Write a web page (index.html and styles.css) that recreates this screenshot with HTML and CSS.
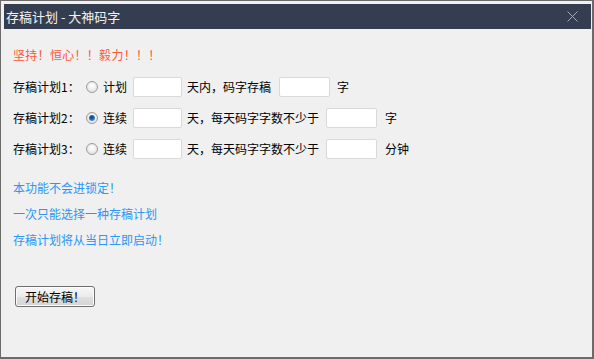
FILE: index.html
```html
<!DOCTYPE html>
<html lang="zh-CN">
<head>
<meta charset="utf-8">
<title>存稿计划 - 大神码字</title>
<link rel="stylesheet" href="styles.css">
</head>
<body>
<div class="window">
  <div class="titlebar">
    <span class="title">存稿计划 - 大神码字</span>
    <svg class="close" width="11" height="11" viewBox="0 0 11 11" aria-label="关闭">
      <path d="M0.5 0.5 L10.5 10.5 M10.5 0.5 L0.5 10.5" stroke="#a3abb6" stroke-width="1" fill="none"/>
    </svg>
  </div>
  <div class="content">
    <div class="motto">坚持！恒心！！毅力！！！</div>

    <div class="plans">
      <div class="row">
        <span class="label">存稿计划1：</span>
        <span class="radio"></span>
        <span class="opt">计划</span>
        <span class="box box-a"></span>
        <span class="txt txt-a">天内，码字存稿</span>
        <span class="box box-b1"></span>
        <span class="unit unit-1">字</span>
      </div>
      <div class="row">
        <span class="label">存稿计划2：</span>
        <span class="radio checked"></span>
        <span class="opt">连续</span>
        <span class="box box-a"></span>
        <span class="txt txt-b">天，每天码字字数不少于</span>
        <span class="box box-b2"></span>
        <span class="unit unit-2">字</span>
      </div>
      <div class="row">
        <span class="label">存稿计划3：</span>
        <span class="radio"></span>
        <span class="opt">连续</span>
        <span class="box box-a"></span>
        <span class="txt txt-b">天，每天码字字数不少于</span>
        <span class="box box-b2"></span>
        <span class="unit unit-2">分钟</span>
      </div>
    </div>

    <div class="notes">
      <div class="note">本功能不会进锁定！</div>
      <div class="note">一次只能选择一种存稿计划</div>
      <div class="note">存稿计划将从当日立即启动！</div>
    </div>

    <button class="start">开始存稿！</button>
  </div>
</div>
</body>
</html>
```

FILE: styles.css
```css
* { box-sizing: border-box; }

html, body {
  margin: 0;
  padding: 0;
  background: #f0f0f0;
}

body {
  font-family: "Noto Sans CJK SC", "Liberation Sans", sans-serif;
  font-size: 12px;
  color: #000;
}

.window {
  width: 594px;
  height: 359px;
  border-style: solid;
  border-color: #6b6b6b;
  border-width: 1px 2px 2px 1px;
  background: #f0f0f0;
  padding-top: 3px;
  overflow: hidden;
}

.titlebar {
  margin: 0 1px 0 3px;
  height: 25px;
  background: #353d50;
  display: flex;
  align-items: center;
  justify-content: space-between;
  padding: 0 13px 1px 2px;
}

.title {
  color: #f2f2f2;
  font-size: 13px;
  line-height: 25px;
}

.close {
  display: block;
  margin-top: 1px;
}

.content {
  padding-left: 12px;
}

.motto {
  margin-top: 19px;
  line-height: 14px;
  color: #ff5636;
  letter-spacing: 0.3px;
}

.plans {
  margin-top: 15px;
  display: flex;
  flex-direction: column;
  gap: 11px;
}

.row {
  display: flex;
  align-items: center;
  height: 20px;
  line-height: 14px;
}

.label {
  width: 73px;
  flex: none;
}

.radio {
  width: 12px;
  height: 12px;
  flex: none;
  border-radius: 50%;
  border: 1px solid #9c9c9c;
  background: radial-gradient(circle at 50% 35%, #ffffff 0%, #f2f2f2 40%, #d6d6d6 100%);
  box-shadow: inset 0 0 0 1px #e8e8e8;
  position: relative;
}

.radio.checked::after {
  content: "";
  position: absolute;
  left: 2px;
  top: 2px;
  width: 6px;
  height: 6px;
  border-radius: 50%;
  background: radial-gradient(circle at 45% 40%, #0b3f7a 0%, #1d5fa6 35%, #4fa6e8 80%, #86c8f5 100%);
}

.opt {
  margin-left: 5px;
  width: 24px;
  flex: none;
}

.box {
  height: 20px;
  flex: none;
  background: #fff;
  border: 1px solid #d9d9d9;
  border-radius: 2px;
}

.box-a { margin-left: 6px; width: 49px; }
.box-b1 { margin-left: 8px; width: 51px; }
.box-b2 { margin-left: 7px; width: 51px; }

.txt { margin-left: 5px; flex: none; }
.txt-a { width: 84px; }
.txt-b { width: 132px; }

.unit-1 { margin-left: 7px; }
.unit-2 { margin-left: 8px; }

.notes {
  margin-top: 16px;
  color: #2e95f2;
}

.note {
  line-height: 26px;
}

.start {
  display: block;
  margin: 33px 0 0 2px;
  width: 80px;
  height: 21px;
  padding: 0;
  font-family: "Noto Sans CJK SC", "Liberation Sans", sans-serif;
  font-size: 12px;
  line-height: 19px;
  color: #000;
  border: 1px solid #707070;
  border-radius: 3px;
  background: linear-gradient(#f7f7f7 0%, #ececec 50%, #e0e0e0 51%, #d4d4d4 100%);
  box-shadow: inset 0 0 0 1px #fbfbfb;
}
```
